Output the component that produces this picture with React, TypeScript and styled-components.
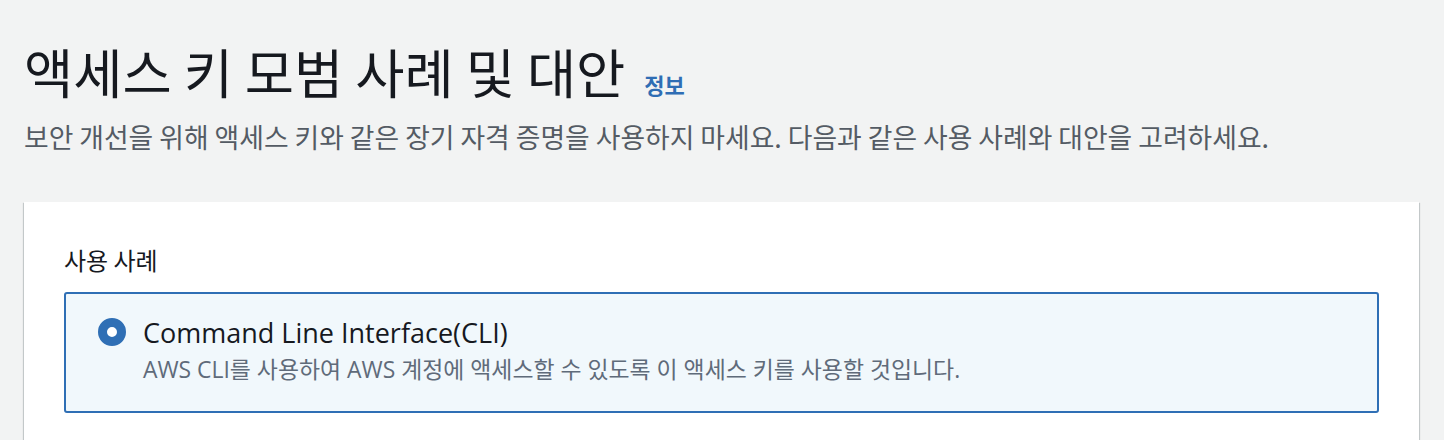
import React from "react";
import styled, { createGlobalStyle } from "styled-components";

const GlobalStyle = createGlobalStyle`
  html, body {
    margin: 0;
    padding: 0;
    background: #f2f3f3;
  }
  body {
    font-family: "Open Sans", "Noto Sans CJK KR", sans-serif;
    color: #16191f;
  }
`;

const Page = styled.div`
  padding: 36px 25px 0 24px;
  display: flex;
  flex-direction: column;
`;

const Header = styled.header`
  display: flex;
  flex-direction: column;
  gap: 13px;
  margin-bottom: 47px;
`;

const TitleRow = styled.div`
  display: flex;
  align-items: baseline;
  gap: 19px;
`;

const Title = styled.h1`
  margin: 0;
  font-family: "Noto Sans CJK KR", sans-serif;
  font-size: 53.5px;
  line-height: 70px;
  font-weight: 400;
  color: #16191f;
`;

const InfoLink = styled.a`
  font-family: "Noto Sans CJK KR", sans-serif;
  font-size: 22px;
  font-weight: 700;
  color: #2f6db4;
  text-decoration: none;
`;

const Description = styled.p`
  margin: 0;
  font-family: "Noto Sans CJK KR", sans-serif;
  font-size: 26.8px;
  line-height: 36px;
  color: #545b64;
`;

const Card = styled.section`
  background: #ffffff;
  padding: 40px;
  box-shadow: 0 1px 1px 0 rgba(0, 28, 36, 0.3), 1px 1px 1px 0 rgba(0, 28, 36, 0.15),
    -1px 1px 1px 0 rgba(0, 28, 36, 0.15);
  display: flex;
  flex-direction: column;
  gap: 14px;
`;

const FieldLabel = styled.div`
  font-family: "Noto Sans CJK KR", sans-serif;
  font-size: 24px;
  line-height: 36px;
  color: #16191f;
`;

const Option = styled.label<{ $selected?: boolean }>`
  display: flex;
  align-items: flex-start;
  gap: 17px;
  padding: 22px 32px 25px 32px;
  border: 2px solid ${(p) => (p.$selected ? "#2f6fb5" : "#aab7b8")};
  border-radius: 3px;
  background: ${(p) => (p.$selected ? "#f1f8fc" : "#ffffff")};
`;

const Radio = styled.span<{ $checked?: boolean }>`
  flex: none;
  width: 28px;
  height: 28px;
  margin-top: 2px;
  border-radius: 50%;
  box-sizing: border-box;
  border: ${(p) => (p.$checked ? "9px solid #2f6fb5" : "2px solid #879596")};
  background: #ffffff;
`;

const OptionText = styled.div`
  display: flex;
  flex-direction: column;
  gap: 4px;
`;

const OptionTitle = styled.div`
  font-family: "Open Sans", "Noto Sans CJK KR", sans-serif;
  font-size: 27px;
  line-height: 34px;
  color: #16191f;
`;

const OptionDesc = styled.div`
  font-family: "Open Sans", "Noto Sans CJK KR", sans-serif;
  font-size: 22.9px;
  line-height: 32px;
  color: #5f6b7a;
`;

export default function App() {
  return (
    <>
      <GlobalStyle />
      <Page>
        <Header>
          <TitleRow>
            <Title>액세스 키 모범 사례 및 대안</Title>
            <InfoLink href="#">정보</InfoLink>
          </TitleRow>
          <Description>
            보안 개선을 위해 액세스 키와 같은 장기 자격 증명을 사용하지 마세요. 다음과 같은 사용 사례와 대안을 고려하세요.
          </Description>
        </Header>
        <Card>
          <FieldLabel>사용 사례</FieldLabel>
          <Option $selected>
            <Radio $checked />
            <OptionText>
              <OptionTitle>Command Line Interface(CLI)</OptionTitle>
              <OptionDesc>AWS CLI를 사용하여 AWS 계정에 액세스할 수 있도록 이 액세스 키를 사용할 것입니다.</OptionDesc>
            </OptionText>
          </Option>
        </Card>
      </Page>
    </>
  );
}
